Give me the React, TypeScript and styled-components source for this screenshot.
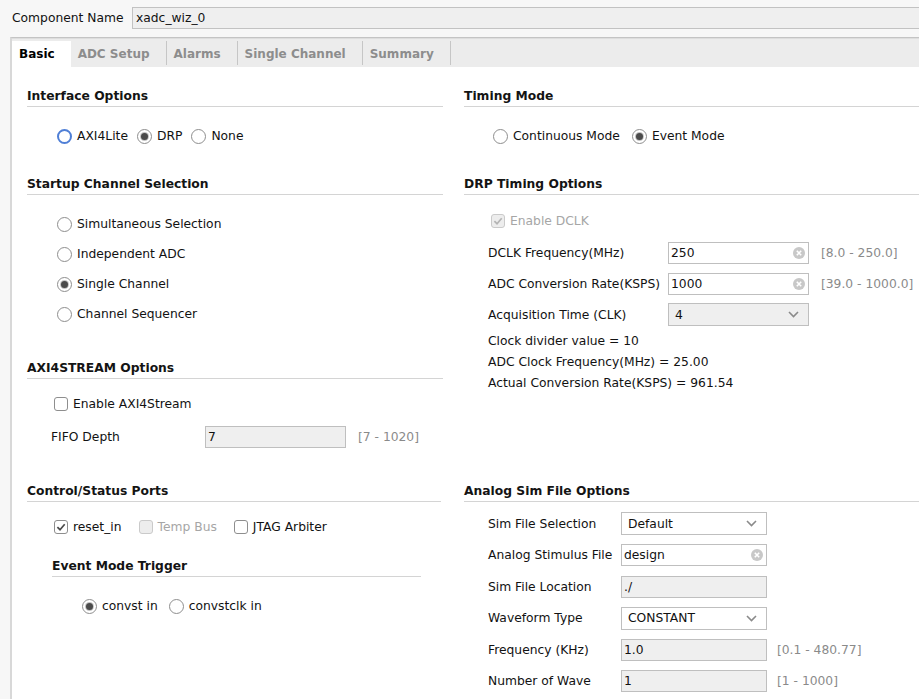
import styled, { createGlobalStyle } from "styled-components";

const GlobalStyle = createGlobalStyle`
    html, body {
        margin: 0;
        padding: 0;
        background: #f7f7f7;
    }
    body {
        font-family: "DejaVu Sans", "Liberation Sans", sans-serif;
        font-size: 12.3px;
        color: #121212;
    }
`;

const Page = styled.div`
    height: 100vh;
    overflow: hidden;
    display: flex;
    flex-direction: column;
    background: #f7f7f7;
`;

const NameRow = styled.div`
    display: flex;
    align-items: center;
    height: 22px;
    margin-top: 7px;
    padding-left: 12px;
`;

const NameLabel = styled.div`
    width: 120px;
`;

const NameField = styled.div`
    flex: 1;
    height: 22px;
    box-sizing: border-box;
    border: 1px solid #c2c2c2;
    border-right: none;
    background: #efefef;
    padding-left: 3px;
    line-height: 20px;
`;

const Panel = styled.div`
    flex: 1;
    display: flex;
    flex-direction: column;
    margin-top: 8px;
    margin-left: 10px;
    border-top: 1px solid #c4c4c4;
    border-left: 2px solid #d8d8d8;
`;

const TabBar = styled.div`
    display: flex;
    height: 29px;
    box-sizing: border-box;
    padding-top: 2px;
    background: #ececec;
    border-top: 1px solid #dedede;
`;

const Tab = styled.div<{ $active?: boolean }>`
    display: flex;
    align-items: center;
    padding: 0 16px 1px 7px;
    font-size: 12px;
    font-weight: bold;
    color: ${(p) => (p.$active ? "#000" : "#8d8d8d")};
    background: ${(p) => (p.$active ? "#fff" : "transparent")};
`;

const TabSep = styled.div`
    width: 1px;
    height: 24px;
    background: #c6c6c6;
`;

const Content = styled.div`
    flex: 1;
    background: #fff;
    padding: 21px 0 0 15px;
    display: grid;
    grid-template-columns: 416px 1fr;
    grid-template-rows: 88px 307px auto;
    column-gap: 21px;
`;

const Column = styled.div`
    display: flex;
    flex-direction: column;
`;

const Section = styled.section<{ $indent?: number; $width?: number; $top?: number }>`
    margin-left: ${(p) => p.$indent ?? 0}px;
    margin-top: ${(p) => p.$top ?? 0}px;
    width: ${(p) => (p.$width ? `${p.$width}px` : "auto")};
`;

const Heading = styled.div`
    font-weight: bold;
    line-height: 16px;
    padding-bottom: 2px;
    border-bottom: 1px solid #d4d4d4;
    color: #141414;
`;

const Body = styled.div<{ $pt: number; $pl: number }>`
    padding: ${(p) => p.$pt}px 0 0 ${(p) => p.$pl}px;
`;

const OptionRow = styled.div<{ $gap?: number; $h?: number }>`
    display: flex;
    align-items: center;
    height: ${(p) => p.$h ?? 30}px;
    gap: ${(p) => p.$gap ?? 11}px;
`;

const Option = styled.label<{ $disabled?: boolean }>`
    display: flex;
    align-items: center;
    gap: 5px;
    color: ${(p) => (p.$disabled ? "#a6a6a6" : "#121212")};
    white-space: nowrap;
`;

const RadioMark = styled.span<{ $on?: boolean; $focus?: boolean }>`
    width: 15px;
    height: 15px;
    box-sizing: border-box;
    border-radius: 50%;
    border: ${(p) => (p.$focus ? "2px solid #4f7fd6" : "1px solid #8e8e8e")};
    background: #fff;
    display: inline-flex;
    align-items: center;
    justify-content: center;
    flex-shrink: 0;
    &::after {
        content: "";
        display: ${(p) => (p.$on ? "block" : "none")};
        width: 7px;
        height: 7px;
        border-radius: 50%;
        background: #4a4a4a;
        box-shadow: 0 0 0 1px #c4c4c4;
    }
`;

const CheckMark = styled.span<{ $disabled?: boolean }>`
    width: 14px;
    height: 14px;
    box-sizing: border-box;
    border-radius: 3px;
    border: 1px solid ${(p) => (p.$disabled ? "#cacaca" : "#8e8e8e")};
    background: ${(p) => (p.$disabled ? "#ededed" : "#fff")};
    display: inline-flex;
    align-items: center;
    justify-content: center;
    flex-shrink: 0;
`;

const FormRow = styled.div<{ $label: number; $h: number }>`
    display: grid;
    grid-template-columns: ${(p) => p.$label}px max-content max-content;
    justify-content: start;
    align-items: center;
    height: ${(p) => p.$h}px;
    white-space: nowrap;
`;

const Field = styled.div<{ $w: number; $h?: number; $gray?: boolean; $select?: boolean }>`
    width: ${(p) => p.$w}px;
    height: ${(p) => p.$h ?? 22}px;
    box-sizing: border-box;
    border: 1px solid #bfbfbf;
    background: ${(p) => (p.$gray ? "#efefef" : "#fff")};
    display: flex;
    align-items: center;
    padding: ${(p) => (p.$select ? "0 9px 0 6px" : "0 3px 0 2px")};
    color: #111;
`;

const FieldText = styled.span`
    flex: 1;
`;

const Range = styled.span<{ $gap: number }>`
    margin-left: ${(p) => p.$gap}px;
    color: #8a8a8a;
    white-space: nowrap;
`;

const InfoLine = styled.div`
    line-height: 21px;
`;

const InfoBlock = styled.div`
    margin-top: 1px;
`;

function Radio({ label, on, focus }: { label: string; on?: boolean; focus?: boolean }) {
    return (
        <Option>
            <RadioMark $on={on} $focus={focus} />
            {label}
        </Option>
    );
}

function Check({ label, on, disabled }: { label: string; on?: boolean; disabled?: boolean }) {
    return (
        <Option $disabled={disabled}>
            <CheckMark $disabled={disabled}>
                {on && (
                    <svg width="10" height="10" viewBox="0 0 10 10">
                        <path d="M1.4 5.2 L4 7.7 L8.7 2.3" fill="none" stroke={disabled ? "#b4b4b4" : "#4a4a4a"} strokeWidth="1.7" />
                    </svg>
                )}
            </CheckMark>
            {label}
        </Option>
    );
}

const ClearIcon = () => (
    <svg width="12" height="12" viewBox="0 0 12 12">
        <circle cx="6" cy="6" r="6" fill="#c8c8c8" />
        <path d="M3.8 3.8 L8.2 8.2 M8.2 3.8 L3.8 8.2" stroke="#fff" strokeWidth="1.6" />
    </svg>
);

const Chevron = () => (
    <svg width="11" height="7" viewBox="0 0 11 7">
        <path d="M1 1 L5.5 5.5 L10 1" fill="none" stroke="#8a8a8a" strokeWidth="1.6" />
    </svg>
);

const tabs = ["Basic", "ADC Setup", "Alarms", "Single Channel", "Summary"];

type SimRow = { label: string; value: string; kind: "select" | "clear" | "gray"; range?: string };

const simRows: SimRow[] = [
    { label: "Sim File Selection", value: "Default", kind: "select" },
    { label: "Analog Stimulus File", value: "design", kind: "clear" },
    { label: "Sim File Location", value: "./", kind: "gray" },
    { label: "Waveform Type", value: "CONSTANT", kind: "select" },
    { label: "Frequency (KHz)", value: "1.0", kind: "gray", range: "[0.1 - 480.77]" },
    { label: "Number of Wave", value: "1", kind: "gray", range: "[1 - 1000]" },
];

function App() {
    return (
        <Page>
            <GlobalStyle />
            <NameRow>
                <NameLabel>Component Name</NameLabel>
                <NameField>xadc_wiz_0</NameField>
            </NameRow>
            <Panel>
                <TabBar>
                    {tabs.map((t, i) => (
                        <>
                            <Tab key={t} $active={i === 0}>{t}</Tab>
                            {i > 0 && <TabSep key={t + "-sep"} />}
                        </>
                    ))}
                </TabBar>
                <Content>
                    {/* row 1 */}
                    <Section>
                        <Heading>Interface Options</Heading>
                        <Body $pt={14} $pl={30}>
                            <OptionRow $gap={9}>
                                <Radio label="AXI4Lite" focus />
                                <Radio label="DRP" on />
                                <Radio label="None" />
                            </OptionRow>
                        </Body>
                    </Section>
                    <Section>
                        <Heading>Timing Mode</Heading>
                        <Body $pt={14} $pl={29}>
                            <OptionRow $gap={12}>
                                <Radio label="Continuous Mode" />
                                <Radio label="Event Mode" on />
                            </OptionRow>
                        </Body>
                    </Section>

                    {/* row 2 */}
                    <Column>
                        <Section>
                            <Heading>Startup Channel Selection</Heading>
                            <Body $pt={14} $pl={30}>
                                <OptionRow><Radio label="Simultaneous Selection" /></OptionRow>
                                <OptionRow><Radio label="Independent ADC" /></OptionRow>
                                <OptionRow><Radio label="Single Channel" on /></OptionRow>
                                <OptionRow><Radio label="Channel Sequencer" /></OptionRow>
                            </Body>
                        </Section>
                        <Section $top={31}>
                            <Heading>AXI4STREAM Options</Heading>
                            <Body $pt={10} $pl={27}>
                                <OptionRow><Check label="Enable AXI4Stream" /></OptionRow>
                            </Body>
                            <Body $pt={2} $pl={24}>
                                <FormRow $label={154} $h={32}>
                                    <span>FIFO Depth</span>
                                    <Field $w={141} $gray><FieldText>7</FieldText></Field>
                                    <Range $gap={12}>[7 - 1020]</Range>
                                </FormRow>
                            </Body>
                        </Section>
                    </Column>
                    <Section>
                        <Heading>DRP Timing Options</Heading>
                        <Body $pt={10} $pl={27}>
                            <OptionRow $h={32}><Check label="Enable DCLK" on disabled /></OptionRow>
                        </Body>
                        <Body $pt={0} $pl={24}>
                            <FormRow $label={180} $h={31}>
                                <span>DCLK Frequency(MHz)</span>
                                <Field $w={141}><FieldText>250</FieldText><ClearIcon /></Field>
                                <Range $gap={12}>[8.0 - 250.0]</Range>
                            </FormRow>
                            <FormRow $label={180} $h={31}>
                                <span>ADC Conversion Rate(KSPS)</span>
                                <Field $w={141}><FieldText>1000</FieldText><ClearIcon /></Field>
                                <Range $gap={12}>[39.0 - 1000.0]</Range>
                            </FormRow>
                            <FormRow $label={180} $h={31}>
                                <span>Acquisition Time (CLK)</span>
                                <Field $w={141} $h={23} $gray $select><FieldText>4</FieldText><Chevron /></Field>
                                <span />
                            </FormRow>
                            <InfoBlock>
                                <InfoLine>Clock divider value = 10</InfoLine>
                                <InfoLine>ADC Clock Frequency(MHz) = 25.00</InfoLine>
                                <InfoLine>Actual Conversion Rate(KSPS) = 961.54</InfoLine>
                            </InfoBlock>
                        </Body>
                    </Section>

                    {/* row 3 */}
                    <Column>
                        <Section $width={414}>
                            <Heading>Control/Status Ports</Heading>
                            <Body $pt={10} $pl={27}>
                                <OptionRow $gap={17}>
                                    <Check label="reset_in" on />
                                    <Check label="Temp Bus" disabled />
                                    <Check label="JTAG Arbiter" />
                                </OptionRow>
                            </Body>
                        </Section>
                        <Section $indent={25} $width={369} $top={16}>
                            <Heading>Event Mode Trigger</Heading>
                            <Body $pt={14} $pl={30}>
                                <OptionRow>
                                    <Radio label="convst in" on />
                                    <Radio label="convstclk in" />
                                </OptionRow>
                            </Body>
                        </Section>
                    </Column>
                    <Section>
                        <Heading>Analog Sim File Options</Heading>
                        <Body $pt={6} $pl={24}>
                            {simRows.map((r) => (
                                <FormRow key={r.label} $label={133} $h={31.5}>
                                    <span>{r.label}</span>
                                    <Field
                                        $w={146}
                                        $h={r.kind === "select" ? 23 : 22}
                                        $gray={r.kind === "gray"}
                                        $select={r.kind === "select"}
                                    >
                                        <FieldText>{r.value}</FieldText>
                                        {r.kind === "select" && <Chevron />}
                                        {r.kind === "clear" && <ClearIcon />}
                                    </Field>
                                    {r.range ? <Range $gap={10}>{r.range}</Range> : <span />}
                                </FormRow>
                            ))}
                        </Body>
                    </Section>
                </Content>
            </Panel>
        </Page>
    );
}

export default App;
